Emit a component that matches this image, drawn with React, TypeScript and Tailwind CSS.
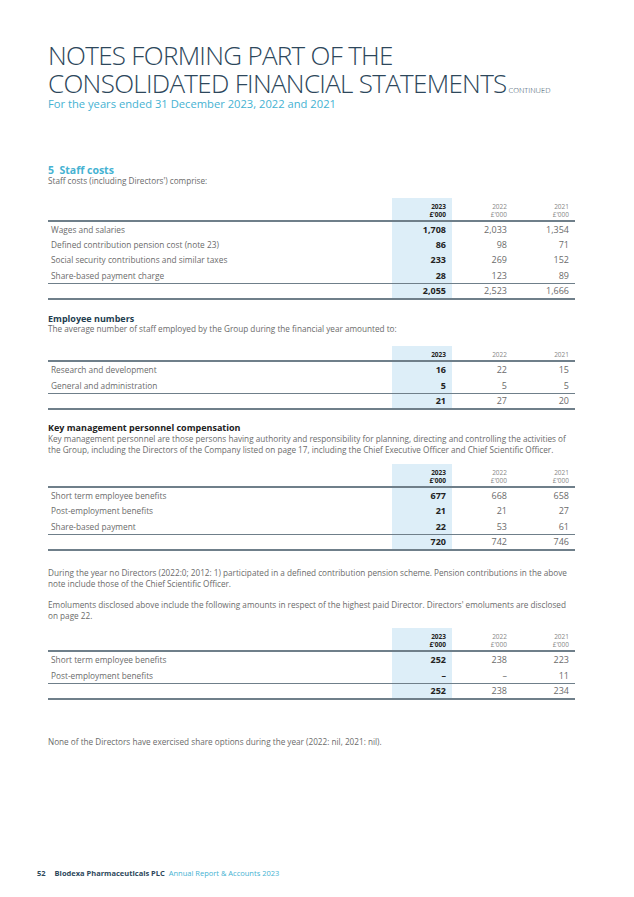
import React from "react";

type Row = { label: string; a: string; b: string; c: string };

const font = { fontFamily: '"Open Sans", "Liberation Sans", sans-serif' };

function Table({
  unit,
  rows,
  total,
}: {
  unit: boolean;
  rows: Row[];
  total: { a: string; b: string; c: string };
}) {
  const hd = "border-b-2 border-[#6f7f8a] pr-[6px] pt-[5px] pb-[1px] text-right text-[6.5px] leading-[8px]";
  return (
    <div className="grid grid-cols-[1fr_60px_61px_62px] text-[8.3px] text-[#6b6b6b]">
      <div className="border-b-2 border-[#6f7f8a]" />
      <div className={`bg-[#ddeef8] font-bold text-[#222] ${hd}`}>
        2023
        {unit && <div>£'000</div>}
      </div>
      <div className={`text-[#888] ${hd}`}>
        2022
        {unit && <div>£'000</div>}
      </div>
      <div className={`text-[#888] ${hd}`}>
        2021
        {unit && <div>£'000</div>}
      </div>
      {rows.map((r, i) => {
        const last = i === rows.length - 1;
        const bd = last ? "border-b-[1.5px] border-[#6f7f8a]" : "";
        return (
          <React.Fragment key={r.label}>
            <div className={`pl-[3px] leading-[15.2px] ${bd}`}>{r.label}</div>
            <div className={`bg-[#ddeef8] pr-[6px] text-right font-bold text-[#222] text-[9px] leading-[15.2px] ${bd}`}>{r.a}</div>
            <div className={`pr-[6px] text-right text-[9px] leading-[15.2px] ${bd}`}>{r.b}</div>
            <div className={`pr-[6px] text-right text-[9px] leading-[15.2px] ${bd}`}>{r.c}</div>
          </React.Fragment>
        );
      })}
      <div className="border-b-2 border-[#6f7f8a] leading-[14.5px]">&nbsp;</div>
      <div className="bg-[#ddeef8] border-b-2 border-[#6f7f8a] pr-[6px] text-right font-bold text-[#222] text-[9px] leading-[14.5px]">{total.a}</div>
      <div className="border-b-2 border-[#6f7f8a] pr-[6px] text-right text-[9px] leading-[14.5px]">{total.b}</div>
      <div className="border-b-2 border-[#6f7f8a] pr-[6px] text-right text-[9px] leading-[14.5px]">{total.c}</div>
    </div>
  );
}

export default function App() {
  return (
    <div className="w-[634px] h-[897px] bg-white relative overflow-hidden" style={font}>
      <div className="pl-[48px] pr-[59px] pt-[41px]">
        <h1 className="text-[26px] leading-[28px] font-light text-[#2d475b] tracking-[-0.7px] whitespace-nowrap">
          NOTES FORMING PART OF THE
          <br />
          CONSOLIDATED FINANCIAL STATEMENTS
          <span className="text-[7.5px] tracking-normal ml-[2px]">CONTINUED</span>
        </h1>
        <div className="text-[11.2px] leading-[14px] text-[#45b2d2] mt-[-7px]">
          For the years ended 31 December 2023, 2022 and 2021
        </div>

        <div className="mt-[53px] text-[10.5px] leading-[12px] font-bold text-[#45b2d2]">5 &nbsp;Staff costs</div>
        <div className="text-[8.2px] leading-[10px] text-[#6b6b6b]">Staff costs (including Directors') comprise:</div>
        <div className="mt-[12px]">
          <Table
            unit
            rows={[
              { label: "Wages and salaries", a: "1,708", b: "2,033", c: "1,354" },
              { label: "Defined contribution pension cost (note 23)", a: "86", b: "98", c: "71" },
              { label: "Social security contributions and similar taxes", a: "233", b: "269", c: "152" },
              { label: "Share-based payment charge", a: "28", b: "123", c: "89" },
            ]}
            total={{ a: "2,055", b: "2,523", c: "1,666" }}
          />
        </div>

        <div className="mt-[13px] text-[9px] leading-[11px] font-bold text-[#233d50]">Employee numbers</div>
        <div className="text-[8.2px] leading-[10px] text-[#6b6b6b]">
          The average number of staff employed by the Group during the financial year amounted to:
        </div>
        <div className="mt-[12px]">
          <Table
            unit={false}
            rows={[
              { label: "Research and development", a: "16", b: "22", c: "15" },
              { label: "General and administration", a: "5", b: "5", c: "5" },
            ]}
            total={{ a: "21", b: "27", c: "20" }}
          />
        </div>

        <div className="mt-[12px] text-[9px] leading-[11px] font-bold text-[#222]">Key management personnel compensation</div>
        <div className="text-[8.2px] leading-[11px] text-[#6b6b6b]">
          Key management personnel are those persons having authority and responsibility for planning, directing and controlling the activities of the Group, including the Directors of the Company listed on page 17, including the Chief Executive Officer and Chief Scientific Officer.
        </div>
        <div className="mt-[9px]">
          <Table
            unit
            rows={[
              { label: "Short term employee benefits", a: "677", b: "668", c: "658" },
              { label: "Post-employment benefits", a: "21", b: "21", c: "27" },
              { label: "Share-based payment", a: "22", b: "53", c: "61" },
            ]}
            total={{ a: "720", b: "742", c: "746" }}
          />
        </div>

        <div className="mt-[16px] text-[8.2px] leading-[11px] text-[#6b6b6b]">
          During the year no Directors (2022:0; 2012: 1) participated in a defined contribution pension scheme. Pension contributions in the above note include those of the Chief Scientific Officer.
        </div>
        <div className="mt-[10px] text-[8.2px] leading-[11px] text-[#6b6b6b]">
          Emoluments disclosed above include the following amounts in respect of the highest paid Director. Directors' emoluments are disclosed on page 22.
        </div>
        <div className="mt-[7px]">
          <Table
            unit
            rows={[
              { label: "Short term employee benefits", a: "252", b: "238", c: "223" },
              { label: "Post-employment benefits", a: "–", b: "–", c: "11" },
            ]}
            total={{ a: "252", b: "238", c: "234" }}
          />
        </div>

        <div className="mt-[36px] text-[8.2px] leading-[11px] text-[#6b6b6b]">
          None of the Directors have exercised share options during the year (2022: nil, 2021: nil).
        </div>
      </div>
      <div className="absolute left-[37px] top-[868px] text-[7.5px] leading-[10px] font-bold text-[#2d475b] flex gap-[9px]">
        <span>52</span>
        <span>
          Biodexa Pharmaceuticals PLC <span className="font-normal text-[#45b2d2]">&nbsp;Annual Report &amp; Accounts 2023</span>
        </span>
      </div>
    </div>
  );
}
